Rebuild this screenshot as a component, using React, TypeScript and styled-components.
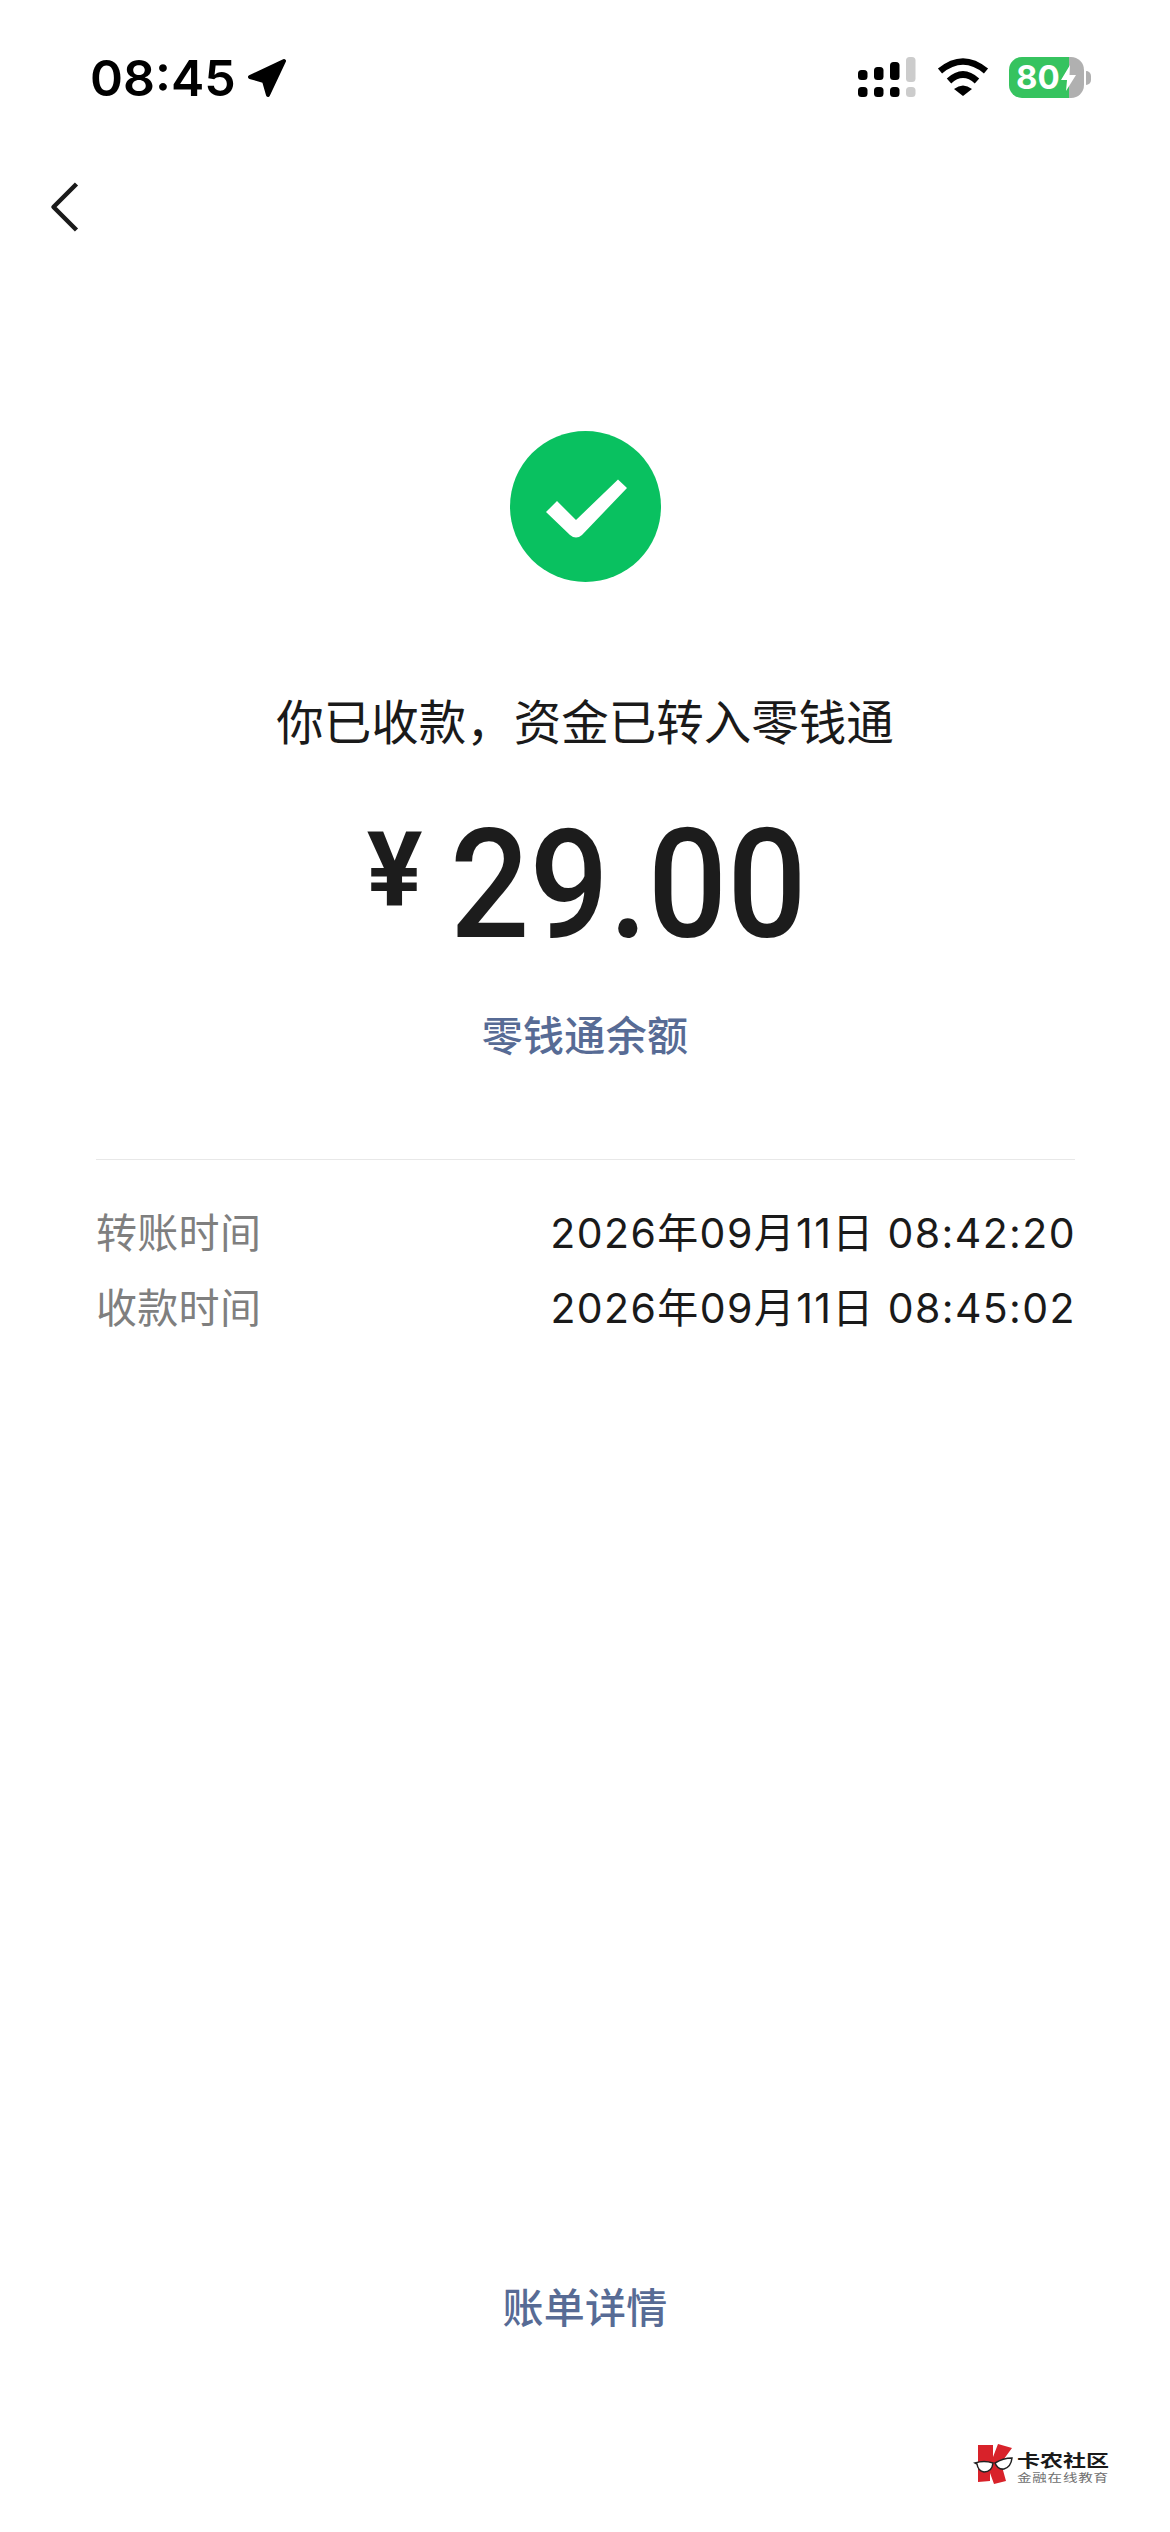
import React from "react";
import styled, { createGlobalStyle } from "styled-components";

const CJK = `"Noto Sans CJK SC", "Noto Sans", sans-serif`;

const Global = createGlobalStyle`
  html, body { margin: 0; padding: 0; background: #fff; }
`;

const Page = styled.div`
  position: relative;
  width: 1170px;
  height: 2532px;
  background: #fff;
  display: flex;
  flex-direction: column;
  font-family: ${CJK};
  overflow: hidden;
`;

const StatusBar = styled.header`
  padding: 59px 79px 0 90px;
  height: 41px;
  display: flex;
  align-items: flex-start;
  justify-content: space-between;
`;

const TimeGroup = styled.div`
  display: flex;
  align-items: flex-start;
  gap: 11px;
`;

const Clock = styled.span`
  font-family: Inter, sans-serif;
  font-weight: 600;
  font-size: 50px;
  line-height: 38px;
  color: #000;
`;

const ArrowSvg = styled.svg`
  display: block;
  margin-top: -1px;
`;

const StatusIcons = styled.div`
  display: flex;
  align-items: flex-start;
  gap: 20px;
  margin-top: -2px;
`;

const Battery = styled.div`
  position: relative;
  width: 75px;
  height: 41px;
  border-radius: 13px;
  overflow: hidden;
  background: linear-gradient(to right, #36c35f 60px, #b0b0b0 60px);
  display: flex;
  align-items: center;
  padding-left: 7px;
  box-sizing: border-box;
  gap: 1px;
`;

const BatteryWrap = styled.div`
  display: flex;
  align-items: center;
  gap: 2px;
  height: 41px;
`;

const BatteryText = styled.span`
  font-family: Inter, sans-serif;
  font-weight: 700;
  font-size: 33px;
  line-height: 1;
  color: #fff;
`;

const BatteryNub = styled.span`
  width: 5px;
  height: 14px;
  background: #b0b0b0;
  border-radius: 0 7px 7px 0;
`;

const NavBar = styled.nav`
  height: 84px;
  margin-top: 65px;
  padding: 0 0 0 49px;
  display: flex;
  align-items: center;
`;

const Main = styled.main`
  display: flex;
  flex-direction: column;
  align-items: center;
  padding-top: 182px;
`;

const SuccessIcon = styled.svg`
  width: 151px;
  height: 151px;
  display: block;
`;

const Title = styled.h1`
  margin: 105px 0 0;
  font-size: 47.5px;
  line-height: 66px;
  font-weight: 400;
  color: #1a1a1a;
`;

const Amount = styled.div`
  margin-top: 57px;
  height: 150px;
  display: flex;
  align-items: flex-start;
  color: #1c1c1c;
  font-family: Roboto, sans-serif;
`;

const Currency = styled.span`
  font-size: 104px;
  line-height: 120px;
  font-weight: 700;
  margin-right: 28px;
`;

const Figure = styled.span`
  font-size: 152px;
  line-height: 150px;
  font-weight: 500;
  transform: scaleX(0.92);
  transform-origin: left center;
  margin-right: -35px;
`;

const BlueLink = styled.a`
  font-size: 41px;
  line-height: 58px;
  color: #576b95;
  font-weight: 500;
  letter-spacing: 0.3px;
`;

const Balance = styled(BlueLink)`
  margin-top: 44px;
`;

const Details = styled.section`
  align-self: stretch;
  margin: 97px 95px 0 96px;
  padding-top: 41px;
  border-top: 1px solid #e8e8e8;
  display: flex;
  flex-direction: column;
  gap: 17px;
`;

const Row = styled.div`
  display: flex;
  justify-content: space-between;
  align-items: center;
  height: 58px;
`;

const Label = styled.span`
  font-size: 41px;
  letter-spacing: 0.3px;
  color: #7f7f7f;
`;

const Value = styled.span`
  font-family: Inter, ${CJK};
  font-size: 41px;
  letter-spacing: 1.4px;
  margin-right: -1px;
  color: #1a1a1a;
`;

const Footer = styled.footer`
  margin-top: auto;
  padding-bottom: 198px;
  display: flex;
  justify-content: center;
`;

const Watermark = styled.div`
  position: absolute;
  left: 973px;
  top: 2443px;
  display: flex;
  align-items: flex-start;
  gap: 4px;
`;

const WatermarkText = styled.div`
  display: flex;
  flex-direction: column;
  margin-top: 6px;
`;

const WatermarkName = styled.span`
  font-size: 23px;
  line-height: 20px;
  font-weight: 700;
  color: #1a1a1a;
  transform: scaleY(0.75);
`;

const WatermarkSub = styled.span`
  font-size: 14.5px;
  line-height: 16px;
  letter-spacing: 0.8px;
  color: #6f6f6f;
  transform: scaleY(0.75);
`;

const ArrowIcon = () => (
  <ArrowSvg width="40" height="40" viewBox="0 0 40 40">
    <path d="M37 3 L3 19 L17 23 L21 37 Z" fill="#000" stroke="#000" strokeWidth="4" strokeLinejoin="round" />
  </ArrowSvg>
);

const SignalIcon = () => (
  <svg width="59" height="41" viewBox="0 0 59 41" style={{ display: "block" }}>
    <g fill="#000">
      <rect x="0" y="13" width="9.5" height="10" rx="3.5" />
      <rect x="16" y="10" width="9.5" height="13" rx="3.5" />
      <rect x="32" y="5" width="9.5" height="18" rx="3.5" />
      <rect x="0" y="30" width="9.5" height="10" rx="3.5" />
      <rect x="16" y="30" width="9.5" height="10" rx="3.5" />
      <rect x="32" y="30" width="9.5" height="10" rx="3.5" />
    </g>
    <g fill="#cccccc">
      <rect x="48" y="0" width="9.5" height="25" rx="3.5" />
      <rect x="48" y="30" width="9.5" height="10" rx="3.5" />
    </g>
  </svg>
);

const WifiIcon = () => (
  <svg width="52" height="40" viewBox="0 0 52 40" style={{ display: "block" }}>
    <g fill="none" stroke="#000" strokeWidth="6.5">
      <path d="M3 14 Q26 -5 49 14" />
      <path d="M12 24 Q26 11 40 24" />
    </g>
    <path d="M17 32 Q26 25 35 32 L26 39 Z" fill="#000" />
  </svg>
);

const BoltIcon = () => (
  <svg width="15" height="26" viewBox="0 0 15 26">
    <path d="M9 0 L0 15 L6 15 L5 26 L15 10 L8.500 10 Z" fill="#fff" />
  </svg>
);

const BackIcon = () => (
  <svg width="30" height="52" viewBox="0 0 30 52">
    <path d="M27.500 3 L4.500 26 L27.500 49" fill="none" stroke="#1a1a1a" strokeWidth="4.500" strokeLinejoin="round" />
  </svg>
);

const LogoIcon = () => (
  <svg width="40" height="41" viewBox="0 0 40 41">
    <path d="M5 2 L20 2 L20 14 L25 1 L39 5 L28 20 L33 38 L21 41 L17 30 L17 38 L5 39 Z" fill="#d8222a" />
    <g fill="#fff" stroke="#222" strokeWidth="1.500">
      <path d="M2 20 Q11 17 20 20 Q19 29 11 29 Q5 28 4 21 Z" />
      <path d="M22 20 Q30 15 39 15 Q38 24 31 26 Q25 27 22 20 Z" />
    </g>
  </svg>
);

const records = [
  { label: "转账时间", value: "2026年09月11日 08:42:20" },
  { label: "收款时间", value: "2026年09月11日 08:45:02" },
];

export default function App() {
  return (
    <Page>
      <Global />
      <StatusBar>
        <TimeGroup>
          <Clock>08:45</Clock>
          <ArrowIcon />
        </TimeGroup>
        <StatusIcons>
          <SignalIcon />
          <WifiIcon />
          <BatteryWrap>
            <Battery>
              <BatteryText>80</BatteryText>
              <BoltIcon />
            </Battery>
            <BatteryNub />
          </BatteryWrap>
        </StatusIcons>
      </StatusBar>
      <NavBar>
        <BackIcon />
      </NavBar>
      <Main>
        <SuccessIcon viewBox="0 0 151 151">
          <circle cx="75.500" cy="75.500" r="75.500" fill="#09c160" />
          <path d="M36 81 L47 70 L66 89 L108 48.500 L117 57 L72 104 Q66 109 60 104 Z" fill="#fff" />
        </SuccessIcon>
        <Title>你已收款，资金已转入零钱通</Title>
        <Amount>
          <Currency>¥</Currency>
          <Figure>29.00</Figure>
        </Amount>
        <Balance>零钱通余额</Balance>
        <Details>
          {records.map((r) => (
            <Row key={r.label}>
              <Label>{r.label}</Label>
              <Value>{r.value}</Value>
            </Row>
          ))}
        </Details>
      </Main>
      <Footer>
        <BlueLink>账单详情</BlueLink>
      </Footer>
      <Watermark>
        <LogoIcon />
        <WatermarkText>
          <WatermarkName>卡农社区</WatermarkName>
          <WatermarkSub>金融在线教育</WatermarkSub>
        </WatermarkText>
      </Watermark>
    </Page>
  );
}
